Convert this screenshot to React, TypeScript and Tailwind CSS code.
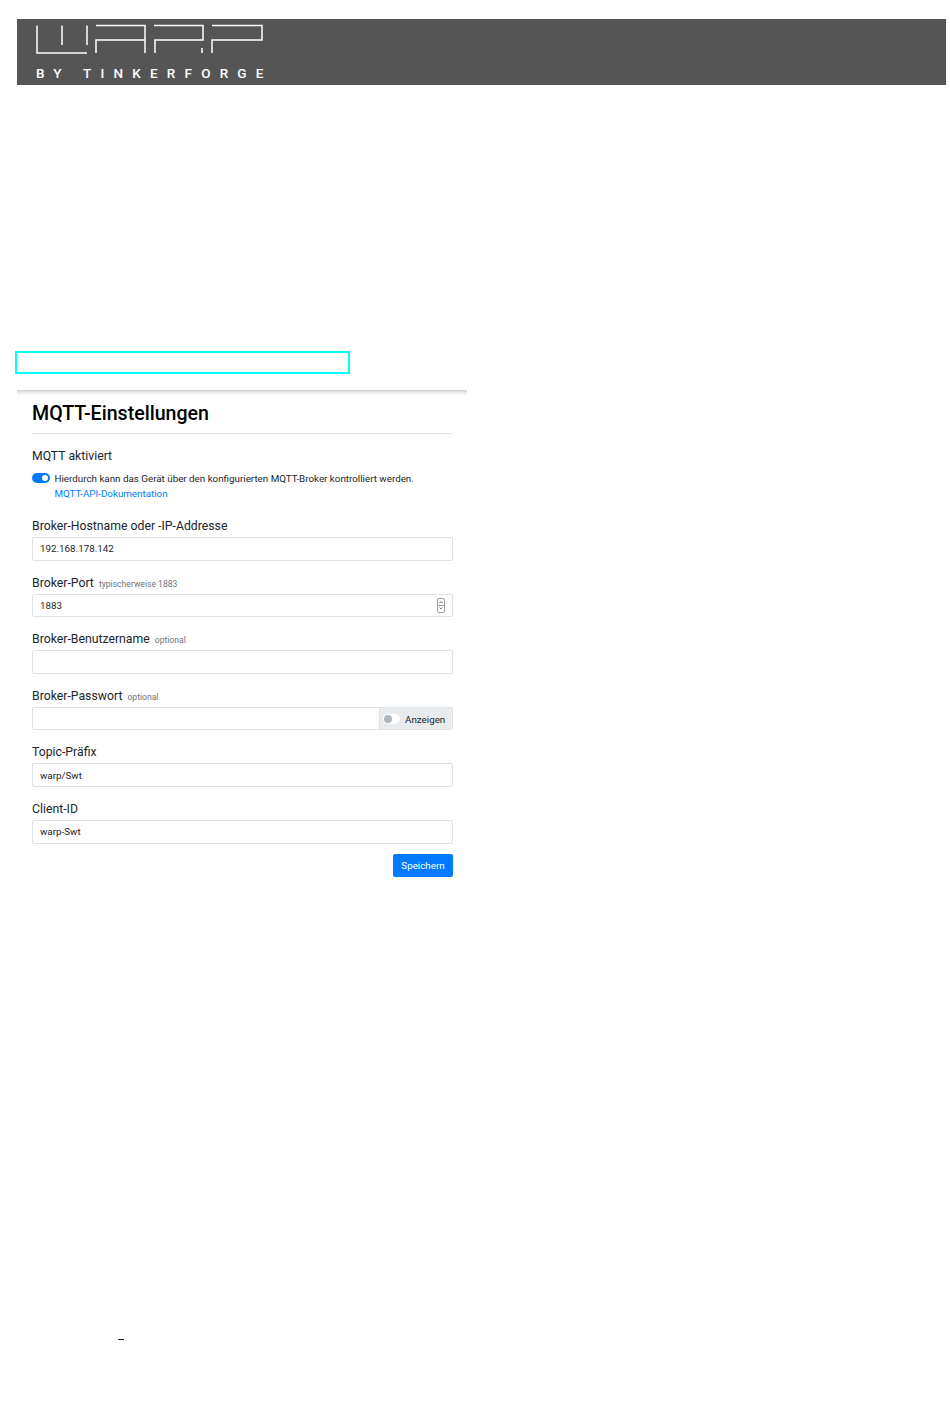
const fieldLabel = "h-[19px] text-[12.25px] leading-[21px] whitespace-nowrap text-[#212529]";
const inputBox = "flex h-[23.6px] w-full items-center rounded-[2px] border border-[#dfe1e4] bg-white px-[7px] pt-[2px] text-[9.8px] text-[#212529]";

function Logo() {
  return (
    <svg width="240" height="32" viewBox="0 0 240 32" fill="none" stroke="#fff" strokeWidth="1.5" className="absolute left-[19px] top-[5px]">
      <path d="M1 1.5V29H51" />
      <path d="M26 1.5V21M51 1.5V21" />
      <path d="M60 29V16H109M60 1.5H109V29" />
      <path d="M118 1.5H167V16H119V29M166 24V29" />
      <path d="M176 29V16H226V1.5H176" />
    </svg>
  );
}

function Field({ label, hint, children }: { label: string; hint?: string; children: React.ReactNode }) {
  return (
    <div className="flex flex-col gap-[2px]">
      <div className={fieldLabel}>
        {label}
        {hint && <span className="ml-[5px] text-[8.6px] leading-none text-[#6c757d]">{hint}</span>}
      </div>
      {children}
    </div>
  );
}

function Spinner() {
  return (
    <div className="mt-[-2px] flex h-[15px] w-[8px] flex-col overflow-hidden rounded-[2px] border border-[#9aa0a6]">
      <svg viewBox="0 0 6 7" className="h-[7px] w-[6px]" fill="none" stroke="#444" strokeWidth="1"><path d="M1.2 4.6L3 2.8L4.8 4.6" /></svg>
      <svg viewBox="0 0 6 7" className="h-[7px] w-[6px] border-t border-[#9aa0a6]" fill="none" stroke="#444" strokeWidth="1"><path d="M1.2 1.8L3 3.6L4.8 1.8" /></svg>
    </div>
  );
}

export default function App() {
  return (
    <div className="min-h-[1419px] bg-white pl-[17px] pt-[19px] font-['Roboto',sans-serif]">
      <header className="relative h-[66px] w-[929px] bg-[#555555]">
        <Logo />
        <div className="absolute left-[19px] top-[47px] text-[13.5px] font-medium leading-[14px] tracking-[9.2px] whitespace-nowrap text-white">
          BY TINKERFORGE
        </div>
      </header>

      <div className="ml-[-2px] mt-[266px] h-[23px] w-[335px] border-2 border-[#00ffff]" />

      <main className="mt-[16px] w-[450px] bg-white px-[15px] pt-[11px] shadow-[inset_0_5px_5px_-4px_rgba(0,0,0,0.3)]">
        <h1 className="border-b border-[#dfe1e4] pb-[7px] text-[19.6px] font-medium leading-[25px] text-[#000]">MQTT-Einstellungen</h1>

        <div className="mt-[13px] text-[12.25px] leading-[19px] text-[#212529]">MQTT aktiviert</div>
        <div className="mt-[6px] flex gap-[4.5px] text-[9.8px] leading-[14.7px]">
          <div className="mt-[1px] flex h-[10px] w-[18px] shrink-0 items-center justify-end rounded-full bg-[#007bff] pr-[2px]">
            <div className="h-[6px] w-[6px] rounded-full bg-white" />
          </div>
          <div>
            <div className="text-[#212529]">Hierdurch kann das Gerät über den konfigurierten MQTT-Broker kontrolliert werden.</div>
            <a className="text-[#007bff]">MQTT-API-Dokumentation</a>
          </div>
        </div>

        <div className="mt-[14.6px] flex w-[421px] flex-col gap-[12px]">
          <Field label="Broker-Hostname oder -IP-Addresse">
            <div className={inputBox}>192.168.178.142</div>
          </Field>
          <Field label="Broker-Port" hint="typischerweise 1883">
            <div className={`${inputBox} justify-between`}>
              <span>1883</span>
              <Spinner />
            </div>
          </Field>
          <Field label="Broker-Benutzername" hint="optional">
            <div className={inputBox} />
          </Field>
          <Field label="Broker-Passwort" hint="optional">
            <div className="flex h-[23.6px] w-full overflow-hidden rounded-[2px] border border-[#dfe1e4]">
              <div className="flex-1 bg-white" />
              <div className="flex w-[73px] items-center gap-[5px] border-l border-[#dfe1e4] bg-[#e9ecef] pl-[3px] pt-[3px] text-[9.8px] text-[#212529]">
                <div className="mt-[-3px] flex h-[10px] w-[17px] items-center rounded-full bg-white pl-[1px]">
                  <div className="h-[8px] w-[8px] rounded-full bg-[#adb5bd]" />
                </div>
                Anzeigen
              </div>
            </div>
          </Field>
          <Field label="Topic-Präfix">
            <div className={inputBox}>warp/Swt</div>
          </Field>
          <Field label="Client-ID">
            <div className={inputBox}>warp-Swt</div>
          </Field>
        </div>

        <div className="mt-[10px] flex w-[421px] justify-end">
          <button className="h-[23px] w-[60px] rounded-[2px] bg-[#007bff] pt-[2px] text-[9.8px] text-white">Speichern</button>
        </div>
      </main>

      <div className="ml-[101px] mt-[462px] h-px w-[6px] bg-[#222]" />
    </div>
  );
}
